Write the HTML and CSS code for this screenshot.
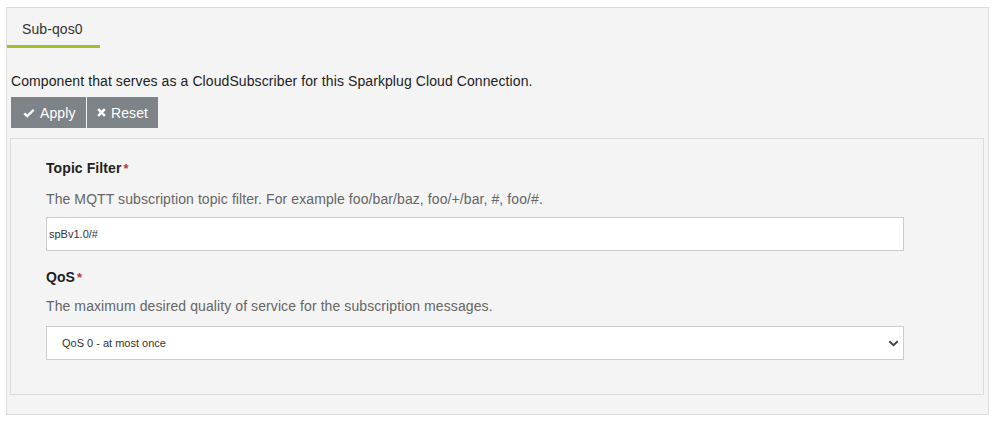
FILE: index.html
```html
<!DOCTYPE html>
<html>
<head>
<meta charset="utf-8">
<link rel="stylesheet" href="styles.css">
</head>
<body>
<div class="outer">
  <div class="tabs">
    <div class="tab active">Sub-qos0</div>
  </div>
  <p class="intro">Component that serves as a CloudSubscriber for this Sparkplug Cloud Connection.</p>
  <div class="btns">
    <button class="btn"><svg class="ico" viewBox="0 0 14 14" width="12" height="12"><path d="M1.5 7.3 L5 10.6 L12.5 3.2" fill="none" stroke="#fff" stroke-width="2.8"/></svg>Apply</button>
    <button class="btn"><svg class="ico" viewBox="0 0 10 10" width="9" height="9"><path d="M1.3 1.3 L8.7 8.7 M8.7 1.3 L1.3 8.7" fill="none" stroke="#fff" stroke-width="2.8"/></svg>Reset</button>
  </div>
  <div class="panel">
    <div class="field">
      <div class="label">Topic Filter<span class="req">*</span></div>
      <div class="desc">The MQTT subscription topic filter. For example foo/bar/baz, foo/+/bar, #, foo/#.</div>
      <input class="input" type="text" value="spBv1.0/#">
    </div>
    <div class="field second">
      <div class="label">QoS<span class="req">*</span></div>
      <div class="desc">The maximum desired quality of service for the subscription messages.</div>
      <div class="selwrap">
        <select class="select"><option>QoS 0 - at most once</option></select>
        <svg class="chev" viewBox="0 0 12 8" width="11" height="7"><path d="M1.2 1.5 L6 6 L10.8 1.5" fill="none" stroke="#444" stroke-width="2.2"/></svg>
      </div>
    </div>
  </div>
</div>
</body>
</html>
```
FILE: styles.css
```css
html, body {
  margin: 0;
  padding: 0;
  background: #fff;
}
body {
  font-family: "Liberation Sans", Arial, sans-serif;
  color: #333;
  padding: 7px 6px 0 6px;
  letter-spacing: 0.09px;
}
.outer {
  width: 981px;
  height: 406px;
  background: #f4f4f4;
  border: 1px solid #dcdcdc;
  box-sizing: content-box;
}
.tabs {
  display: flex;
}
.tab {
  width: 93px;
  height: 40px;
  box-sizing: border-box;
  padding: 13px 0 0 15px;
  font-size: 14px;
  color: #333;
  border-bottom: 3px solid #9ec02b;
}
.intro {
  margin: 25px 0 0 4px;
  font-size: 14px;
  line-height: 16px;
  color: #222;
}
.btns {
  display: flex;
  margin: 8px 0 0 4px;
  gap: 1px;
}
.btn {
  display: flex;
  align-items: center;
  height: 31px;
  padding: 0 4px 0 11px;
  background: #7d8386;
  color: #fff;
  border: none;
  font-family: "Liberation Sans", Arial, sans-serif;
  font-size: 14px;
  letter-spacing: 0.09px;
  overflow: hidden;
}
.btn:first-child { width: 75px; padding-left: 12px; }
.btn:last-child { width: 71px; padding-left: 10px; }
.ico { margin-right: 5px; flex-shrink: 0; }
.panel {
  margin: 10px 4px 0 3px;
  border: 1px solid #dcdcdc;
  height: 257px;
  padding: 21px 0 0 35px;
  box-sizing: border-box;
}
.field {
  width: 858px;
}
.label {
  font-weight: bold;
  font-size: 14px;
  color: #222;
  line-height: 17px;
}
.req {
  color: #b53a3a;
  margin-left: 2px;
  font-size: 13px;
  vertical-align: top;
}
.desc {
  margin-top: 14px;
  font-size: 14px;
  color: #666;
  line-height: 17px;
}
.second .desc {
  margin-top: 12px;
}
.input {
  display: block;
  margin-top: 9px;
  width: 858px;
  height: 34px;
  box-sizing: border-box;
  border: 1px solid #cccccc;
  background: #fff;
  padding: 0 0 0 2px;
  font-family: "Liberation Sans", Arial, sans-serif;
  font-size: 11px;
  color: #333;
  margin-bottom: 18px;
}
.selwrap {
  position: relative;
  margin-top: 11px;
  width: 858px;
}
.select {
  display: block;
  width: 858px;
  height: 34px;
  box-sizing: border-box;
  border: 1px solid #cccccc;
  background: #fff;
  appearance: none;
  -webkit-appearance: none;
  padding: 0 0 0 15px;
  font-family: "Liberation Sans", Arial, sans-serif;
  font-size: 11px;
  color: #333;
  border-radius: 0;
}
.chev {
  position: absolute;
  right: 5px;
  top: 14px;
}
```
